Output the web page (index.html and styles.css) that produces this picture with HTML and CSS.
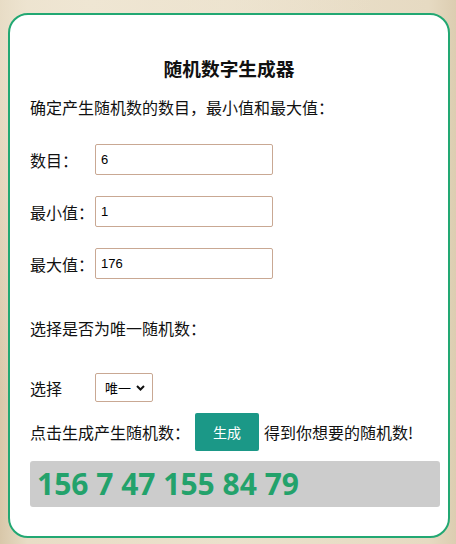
FILE: index.html
```html
<!DOCTYPE html>
<html lang="zh-CN">
<head>
    <meta charset="UTF-8">
    <meta name="viewport" content="width=device-width, initial-scale=1.0">
    <title>随机数字生成器</title>
    <link rel="stylesheet" href="styles.css">
</head>
<body>

    <!-- Generator card -->
    <div class="card">
        <h3 class="title">随机数字生成器</h3>
        <p class="intro">确定产生随机数的数目，最小值和最大值：</p>

        <div class="field">
            <label for="count">数目：</label>
            <input type="text" id="count" value="6">
        </div>
        <div class="field">
            <label for="min">最小值：</label>
            <input type="text" id="min" value="1">
        </div>
        <div class="field">
            <label for="max">最大值：</label>
            <input type="text" id="max" value="176">
        </div>

        <p class="intro unique-tip">选择是否为唯一随机数：</p>

        <div class="field pick">
            <label for="unique">选择</label>
            <select id="unique">
                <option value="1">唯一</option>
                <option value="0">重复</option>
            </select>
        </div>

        <div class="action">
            <span>点击生成产生随机数：</span>
            <button id="generateBtn">生成</button>
            <span>得到你想要的随机数!</span>
        </div>

        <div id="result" class="result">156 7 47 155 84 79</div>
    </div>

</body>
</html>
```

FILE: styles.css
```css
body {
    margin: 0;
    padding: 13px 0 0 8px;
    font-family: "Noto Sans CJK SC", "Noto Sans", sans-serif;
    font-size: 16px;
    color: #111;
    height: 544px;
    box-sizing: border-box;
    background-color: #e6dbc3;
    background-image:
        radial-gradient(ellipse at 20% 0%, #efe6d3 0%, rgba(239, 230, 211, 0) 55%),
        linear-gradient(90deg, #d8c7a9 0%, #e8ddc6 6%, #ebe1cc 50%, #e6dac2 94%, #dccdb1 100%);
    overflow: hidden;
}

.card {
    width: 442px;
    height: 525px;
    box-sizing: border-box;
    background: #fff;
    border: 2px solid #22a873;
    border-radius: 20px;
    padding: 40px 20px 0 20px;
}

.title {
    margin: 0 0 14px;
    font-size: 18.72px;
    line-height: 26px;
    font-weight: bold;
    text-align: center;
}

.intro {
    margin: 0 0 25px;
    line-height: 24px;
}

.field {
    display: flex;
    align-items: center;
    height: 31px;
    margin-bottom: 21px;
}

.field label {
    width: 65px;
    flex: none;
}

.field input {
    width: 178px;
    height: 31px;
    box-sizing: border-box;
    border: 1px solid #c9a893;
    border-radius: 2px;
    padding: 0 5px;
    font-family: "Liberation Sans", Arial, sans-serif;
    font-size: 13px;
    color: #000;
    outline: none;
}

.unique-tip {
    margin-top: 37px;
    margin-bottom: 33px;
}

.pick {
    height: 29px;
    margin-bottom: 11px;
}

/* select with a drawn chevron so the arrow is the same everywhere */
.pick select {
    -webkit-appearance: none;
    appearance: none;
    width: 58px;
    height: 29px;
    border: 1px solid #c9a893;
    border-radius: 2px;
    background: #fff url("data:image/svg+xml,%3Csvg xmlns='http://www.w3.org/2000/svg' width='9' height='6' viewBox='0 0 9 6'%3E%3Cpath d='M1 1l3.5 3.5L8 1' fill='none' stroke='%23111' stroke-width='2'/%3E%3C/svg%3E") no-repeat right 7px center;
    font-family: "Noto Sans CJK SC", sans-serif;
    font-size: 13px;
    color: #000;
    padding: 0 0 0 9px;
}

.action {
    display: flex;
    align-items: center;
    height: 38px;
    margin-bottom: 10px;
}

.action button {
    width: 64px;
    height: 38px;
    margin: 0 5px;
    border: none;
    border-radius: 2px;
    background-color: #1b9887;
    color: #fff;
    font-family: "Noto Sans CJK SC", sans-serif;
    font-size: 14px;
    cursor: pointer;
}

.result {
    width: 410px;
    height: 46px;
    box-sizing: border-box;
    background: #cccccc;
    border-radius: 3px;
    padding-left: 7px;
    font-family: "Open Sans", sans-serif;
    font-weight: bold;
    font-size: 30px;
    line-height: 46px;
    color: #23a26b;
}
```
